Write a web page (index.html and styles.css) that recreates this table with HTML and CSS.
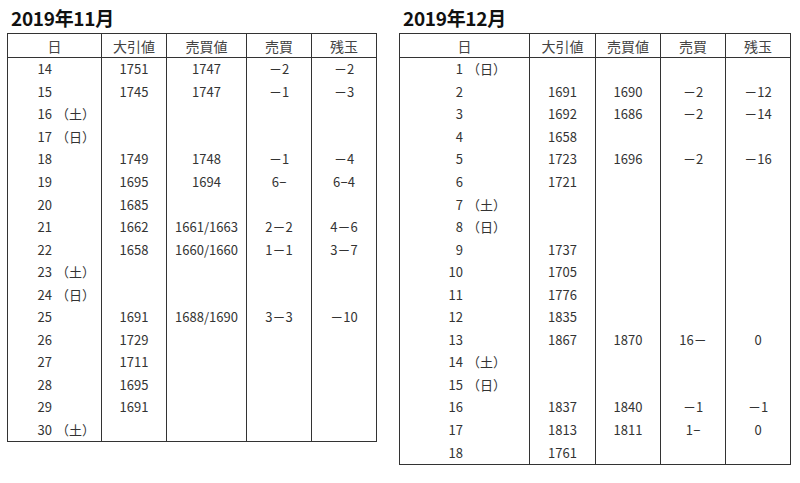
FILE: index.html
```html
<!DOCTYPE html>
<html lang="ja">
<head>
<meta charset="utf-8">
<link rel="stylesheet" href="styles.css">
</head>
<body>
<div class="page">
  <section class="month m-nov">
    <h2 class="title">2019年11月</h2>
    <table class="tbl">
      <colgroup><col class="c1"><col class="c2"><col class="c3"><col class="c4"><col class="c5"></colgroup>
      <thead><tr><th>日</th><th>大引値</th><th>売買値</th><th>売買</th><th>残玉</th></tr></thead>
      <tbody>
        <tr><td class="d"><span class="n">14</span></td><td>1751</td><td>1747</td><td>－2</td><td>－2</td></tr>
        <tr><td class="d"><span class="n">15</span></td><td>1745</td><td>1747</td><td>－1</td><td>－3</td></tr>
        <tr><td class="d"><span class="n">16</span><span class="w">（土）</span></td><td></td><td></td><td></td><td></td></tr>
        <tr><td class="d"><span class="n">17</span><span class="w">（日）</span></td><td></td><td></td><td></td><td></td></tr>
        <tr><td class="d"><span class="n">18</span></td><td>1749</td><td>1748</td><td>－1</td><td>－4</td></tr>
        <tr><td class="d"><span class="n">19</span></td><td>1695</td><td>1694</td><td>6<span class="m">−</span></td><td>6<span class="m">−</span>4</td></tr>
        <tr><td class="d"><span class="n">20</span></td><td>1685</td><td></td><td></td><td></td></tr>
        <tr><td class="d"><span class="n">21</span></td><td>1662</td><td>1661/1663</td><td>2－2</td><td>4－6</td></tr>
        <tr><td class="d"><span class="n">22</span></td><td>1658</td><td>1660/1660</td><td>1－1</td><td>3－7</td></tr>
        <tr><td class="d"><span class="n">23</span><span class="w">（土）</span></td><td></td><td></td><td></td><td></td></tr>
        <tr><td class="d"><span class="n">24</span><span class="w">（日）</span></td><td></td><td></td><td></td><td></td></tr>
        <tr><td class="d"><span class="n">25</span></td><td>1691</td><td>1688/1690</td><td>3－3</td><td>－10</td></tr>
        <tr><td class="d"><span class="n">26</span></td><td>1729</td><td></td><td></td><td></td></tr>
        <tr><td class="d"><span class="n">27</span></td><td>1711</td><td></td><td></td><td></td></tr>
        <tr><td class="d"><span class="n">28</span></td><td>1695</td><td></td><td></td><td></td></tr>
        <tr><td class="d"><span class="n">29</span></td><td>1691</td><td></td><td></td><td></td></tr>
        <tr><td class="d"><span class="n">30</span><span class="w">（土）</span></td><td></td><td></td><td></td><td></td></tr>
      </tbody>
    </table>
  </section>
  <section class="month m-dec">
    <h2 class="title">2019年12月</h2>
    <table class="tbl">
      <colgroup><col class="c1"><col class="c2"><col class="c3"><col class="c4"><col class="c5"></colgroup>
      <thead><tr><th>日</th><th>大引値</th><th>売買値</th><th>売買</th><th>残玉</th></tr></thead>
      <tbody>
        <tr><td class="d"><span class="n">1</span><span class="w">（日）</span></td><td></td><td></td><td></td><td></td></tr>
        <tr><td class="d"><span class="n">2</span></td><td>1691</td><td>1690</td><td>－2</td><td>－12</td></tr>
        <tr><td class="d"><span class="n">3</span></td><td>1692</td><td>1686</td><td>－2</td><td>－14</td></tr>
        <tr><td class="d"><span class="n">4</span></td><td>1658</td><td></td><td></td><td></td></tr>
        <tr><td class="d"><span class="n">5</span></td><td>1723</td><td>1696</td><td>－2</td><td>－16</td></tr>
        <tr><td class="d"><span class="n">6</span></td><td>1721</td><td></td><td></td><td></td></tr>
        <tr><td class="d"><span class="n">7</span><span class="w">（土）</span></td><td></td><td></td><td></td><td></td></tr>
        <tr><td class="d"><span class="n">8</span><span class="w">（日）</span></td><td></td><td></td><td></td><td></td></tr>
        <tr><td class="d"><span class="n">9</span></td><td>1737</td><td></td><td></td><td></td></tr>
        <tr><td class="d"><span class="n">10</span></td><td>1705</td><td></td><td></td><td></td></tr>
        <tr><td class="d"><span class="n">11</span></td><td>1776</td><td></td><td></td><td></td></tr>
        <tr><td class="d"><span class="n">12</span></td><td>1835</td><td></td><td></td><td></td></tr>
        <tr><td class="d"><span class="n">13</span></td><td>1867</td><td>1870</td><td>16－</td><td>0</td></tr>
        <tr><td class="d"><span class="n">14</span><span class="w">（土）</span></td><td></td><td></td><td></td><td></td></tr>
        <tr><td class="d"><span class="n">15</span><span class="w">（日）</span></td><td></td><td></td><td></td><td></td></tr>
        <tr><td class="d"><span class="n">16</span></td><td>1837</td><td>1840</td><td>－1</td><td>－1</td></tr>
        <tr><td class="d"><span class="n">17</span></td><td>1813</td><td>1811</td><td>1<span class="m">−</span></td><td>0</td></tr>
        <tr><td class="d"><span class="n">18</span></td><td>1761</td><td></td><td></td><td></td></tr>
      </tbody>
    </table>
  </section>
</div>
</body>
</html>
```

FILE: styles.css
```css
html, body {
  margin: 0;
  padding: 0;
  background: #ffffff;
}
body {
  font-family: "Noto Sans CJK JP", "Noto Sans", sans-serif;
  color: #333333;
}
.page {
  display: flex;
  align-items: flex-start;
  padding-left: 7px;
  gap: 22px;
}
.title {
  margin: 0;
  padding-left: 4px;
  height: 33px;
  line-height: 36px;
  font-size: 19px;
  font-weight: 700;
  color: #111111;
  letter-spacing: -0.3px;
}
.tbl {
  border-collapse: collapse;
  table-layout: fixed;
  border: 1px solid #333333;
  font-size: 13px;
}
.m-nov .tbl { width: 370px; }
.m-dec .tbl { width: 392px; }
.m-nov .c1 { width: 94px; }
.m-nov .c2 { width: 65px; }
.m-nov .c3 { width: 80px; }
.m-nov .c4 { width: 65px; }
.m-nov .c5 { width: 65px; }
.m-dec .c1 { width: 130px; }
.m-dec .c2 { width: 66px; }
.m-dec .c3 { width: 65px; }
.m-dec .c4 { width: 65px; }
.m-dec .c5 { width: 65px; }
.tbl th {
  height: 23px;
  padding: 0;
  font-size: 14px;
  font-weight: 400;
  color: #444444;
  border-left: 1px solid #333333;
  border-bottom: 1px solid #333333;
  text-align: center;
  vertical-align: middle;
}
.tbl td {
  height: 22.55px;
  padding: 0;
  text-align: center;
  vertical-align: middle;
  border-left: 1px solid #333333;
  white-space: nowrap;
  line-height: 16px;
}
.tbl td.d {
  text-align: left;
}
.m-nov td.d { padding-left: 28px; }
.m-dec td.d { padding-left: 47px; }
.n {
  display: inline-block;
  width: 16px;
  text-align: right;
}
.w {
  margin-left: 4px;
}
.m {
  font-family: "Noto Sans", sans-serif;
}
```
